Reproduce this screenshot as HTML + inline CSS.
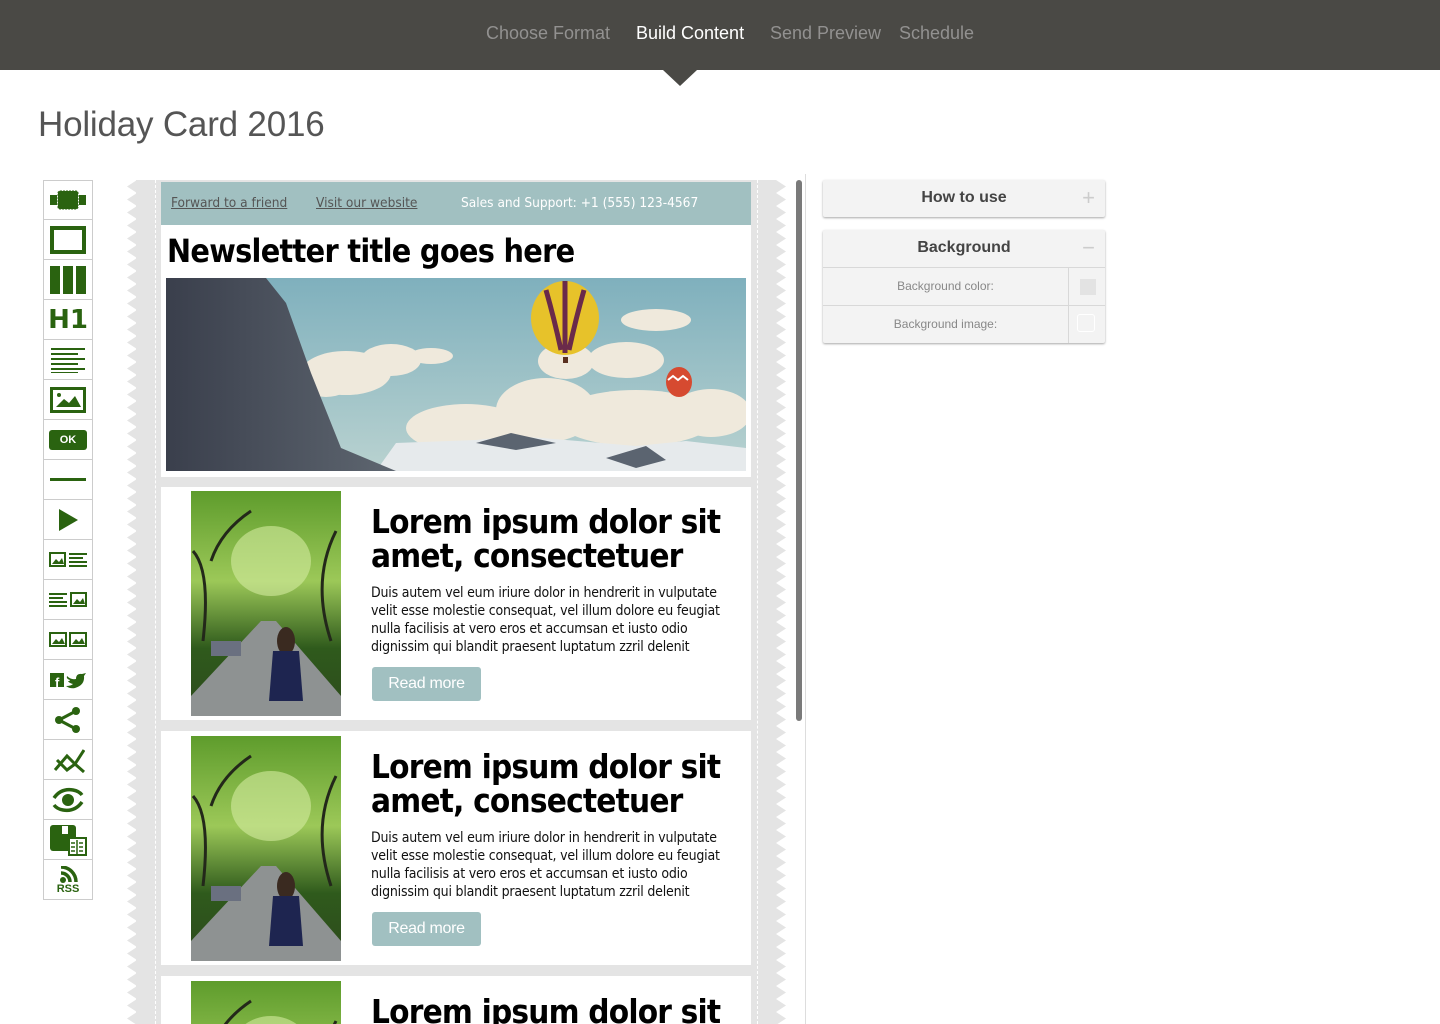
<!DOCTYPE html>
<html><head><meta charset="utf-8"><style>
*{margin:0;padding:0;box-sizing:border-box}
html,body{overflow:hidden}
body{width:1440px;height:1024px;background:#fff;font-family:"Liberation Sans",sans-serif;position:relative}
.top{position:absolute;left:0;top:0;width:1440px;height:70px;background:#4a4945}
.nav{position:absolute;top:23px;font-size:18px;color:#929190}
.arrow{position:absolute;left:663px;top:70px;width:0;height:0;border-left:17px solid transparent;border-right:17px solid transparent;border-top:16px solid #4a4945}
h1{position:absolute;left:38px;top:105px;font-size:35px;font-weight:normal;color:#555;letter-spacing:-0.2px}
.tb{position:absolute;left:43px;top:180px;width:50px}
.tb div{height:40px;border:1px solid #ccc;border-top:none;display:flex;align-items:center;justify-content:center;background:#fff}
.tb div:first-child{border-top:1px solid #ccc}
.canvas{position:absolute;left:136px;top:180px;width:640px;height:844px;background:#e4e4e4}
.dash{position:absolute;top:180px;height:844px;border-left:1px dashed #fff}
.blk{position:absolute;left:161px;width:590px;background:#fff;overflow:hidden}
.hdr{position:absolute;left:161px;top:182px;width:590px;height:43px;background:#a1c0c1;font-family:"DejaVu Sans Condensed","DejaVu Sans",sans-serif;font-size:13.6px}
.hdr a{position:absolute;top:13px;color:#555;text-decoration:underline}
.ttl{position:absolute;left:167px;top:232px;font:bold 32px "DejaVu Sans Condensed","DejaVu Sans",sans-serif;color:#000;letter-spacing:-0.7px}
.ph{position:absolute;left:30px;top:4px;width:150px;height:225px}
.ht{position:absolute;left:210px;top:18px;font:bold 33px/34px "DejaVu Sans Condensed","DejaVu Sans",sans-serif;color:#000;letter-spacing:-0.8px;white-space:nowrap}
.tx{position:absolute;left:210px;top:97px;font:14px/18px "DejaVu Sans Condensed","DejaVu Sans",sans-serif;color:#111;white-space:nowrap;letter-spacing:-0.2px}
.btn{position:absolute;left:211px;top:180px;width:109px;height:34px;background:#a1c0c1;border-radius:3px;color:#fff;font-size:16px;text-align:center;line-height:34px;letter-spacing:-0.3px}
.panel{position:absolute;left:823px;width:282px;background:#f3f3f3;box-shadow:0 1px 2px rgba(0,0,0,.35);border-radius:2px}
.ph2{height:37px;text-align:center;line-height:36px;font-size:16px;color:#444;font-weight:bold;position:relative}
.ph2 span{position:absolute;right:10px;top:0;color:#ccc;font-size:22px;font-weight:normal}
.row{height:38px;border-top:1px solid #d8d8d8;position:relative;font-size:12px;color:#888;line-height:37px}
.row .l{position:absolute;left:0;width:245px;text-align:center}
.row .r{position:absolute;left:245px;top:0;width:37px;height:37px;border-left:1px solid #d8d8d8}
</style></head><body>
<div class="top"></div>
<div class="nav" style="left:486px">Choose Format</div>
<div class="nav" style="left:636px;color:#fff">Build Content</div>
<div class="nav" style="left:770px">Send Preview</div>
<div class="nav" style="left:899px">Schedule</div>
<div class="arrow"></div>
<h1>Holiday Card 2016</h1>

<svg style="position:absolute;left:0;top:0" width="1440" height="1024">
<defs>
<pattern id="zl" x="127" y="180" width="10" height="13" patternUnits="userSpaceOnUse"><polygon points="10,0 0,6.5 10,13" fill="#e4e4e4"/></pattern>
<pattern id="zr" x="776" y="180" width="10" height="13" patternUnits="userSpaceOnUse"><polygon points="0,0 10,6.5 0,13" fill="#e4e4e4"/></pattern>
</defs>
<rect x="127" y="180" width="10" height="844" fill="url(#zl)"/>
<rect x="776" y="180" width="10" height="844" fill="url(#zr)"/>
<rect x="796" y="180" width="6" height="541" rx="3" fill="#7a7a7a"/>
<rect x="805" y="174" width="1" height="850" fill="#ddd"/>
</svg>
<div class="canvas"></div>
<div class="dash" style="left:155px"></div>
<div class="dash" style="left:757px"></div>

<div class="hdr">
<a style="left:10px">Forward to a friend</a>
<a style="left:155px">Visit our website</a>
<span style="position:absolute;left:300px;top:13px;color:#fff">Sales and Support: +1 (555) 123-4567</span>
</div>
<div class="blk" style="top:225px;height:252px"></div>
<div class="ttl">Newsletter title goes here</div>
<svg style="position:absolute;left:166px;top:278px" width="580" height="193" viewBox="0 0 580 193">
<defs><linearGradient id="sky" x1="0" y1="0" x2="0" y2="1"><stop offset="0" stop-color="#7fb0bd"/><stop offset="1" stop-color="#b9d2d0"/></linearGradient>
<linearGradient id="rock" x1="0" y1="0" x2="1" y2="0"><stop offset="0" stop-color="#3a3f4c"/><stop offset="1" stop-color="#5e6670"/></linearGradient></defs>
<rect width="580" height="193" fill="url(#sky)"/>
<g fill="#efe9dc">
<ellipse cx="180" cy="95" rx="45" ry="22"/><ellipse cx="225" cy="82" rx="30" ry="16"/><ellipse cx="160" cy="105" rx="25" ry="14"/><ellipse cx="265" cy="78" rx="22" ry="8"/>
<ellipse cx="400" cy="83" rx="28" ry="18"/><ellipse cx="460" cy="82" rx="38" ry="18"/><ellipse cx="405" cy="52" rx="18" ry="7"/>
<ellipse cx="490" cy="42" rx="35" ry="11"/>
<ellipse cx="300" cy="150" rx="60" ry="24"/><ellipse cx="380" cy="132" rx="50" ry="32"/><ellipse cx="470" cy="140" rx="80" ry="28"/><ellipse cx="545" cy="135" rx="40" ry="24"/>
</g>
<polygon points="210,193 230,165 310,162 350,158 400,162 470,168 520,163 580,170 580,193" fill="#e6eaec"/>
<polygon points="310,165 345,155 390,165 350,172" fill="#5b6470"/>
<polygon points="440,180 480,168 500,182 470,190" fill="#5b6470"/>
<polygon points="0,0 100,0 120,25 145,95 175,170 230,193 0,193" fill="url(#rock)"/>
<ellipse cx="399" cy="40" rx="34" ry="37" fill="#e7c22a"/>
<path d="M380,12 Q388,40 395,72 M399,3 L399,75 M418,12 Q410,40 403,72" stroke="#6a2a4a" stroke-width="5" fill="none"/>
<rect x="397" y="79" width="5" height="6" fill="#5a3020"/>
<ellipse cx="513" cy="104" rx="13" ry="15" fill="#d64a30"/>
<path d="M502,102 l5,-4 l5,4 l5,-4 l5,4" stroke="#fff" stroke-width="2" fill="none"/>
</svg>

<svg width="0" height="0" style="position:absolute">
<defs>
<linearGradient id="g1" x1="0" y1="0" x2="0" y2="1"><stop offset="0" stop-color="#5e9c2c"/><stop offset=".4" stop-color="#9cc858"/><stop offset=".7" stop-color="#2f5a1c"/><stop offset="1" stop-color="#2d4a1c"/></linearGradient>
<symbol id="park" viewBox="0 0 150 225">
<rect width="150" height="225" fill="url(#g1)"/>
<ellipse cx="80" cy="70" rx="40" ry="35" fill="#d4eba0" opacity=".6"/>
<path d="M2,60 Q20,80 12,150 M145,40 Q120,90 140,150 M60,20 Q30,40 20,70" stroke="#23281a" stroke-width="3" fill="none"/>
<polygon points="70,130 85,130 150,205 150,225 0,225 0,205" fill="#8e9292"/>
<rect x="20" y="150" width="30" height="15" fill="#6a7080"/>
<ellipse cx="95" cy="150" rx="9" ry="14" fill="#3a2a20"/>
<polygon points="82,160 108,160 112,210 78,210" fill="#1e2550"/>
</symbol>
</defs></svg>

<div class="blk" style="top:487px;height:233px">
<svg class="ph"><use href="#park"/></svg>
<div class="ht">Lorem ipsum dolor sit<br>amet, consectetuer</div>
<div class="tx">Duis autem vel eum iriure dolor in hendrerit in vulputate<br>velit esse molestie consequat, vel illum dolore eu feugiat<br>nulla facilisis at vero eros et accumsan et iusto odio<br>dignissim qui blandit praesent luptatum zzril delenit</div>
<div class="btn">Read more</div>
</div>
<div class="blk" style="top:731px;height:234px">
<svg class="ph" style="top:5px"><use href="#park"/></svg>
<div class="ht" style="top:19px">Lorem ipsum dolor sit<br>amet, consectetuer</div>
<div class="tx" style="top:98px">Duis autem vel eum iriure dolor in hendrerit in vulputate<br>velit esse molestie consequat, vel illum dolore eu feugiat<br>nulla facilisis at vero eros et accumsan et iusto odio<br>dignissim qui blandit praesent luptatum zzril delenit</div>
<div class="btn" style="top:181px">Read more</div>
</div>
<div class="blk" style="top:976px;height:48px">
<svg class="ph" style="top:5px"><use href="#park"/></svg>
<div class="ht" style="top:19px">Lorem ipsum dolor sit</div>
</div>

<div class="tb">
<div><svg width="36" height="20"><rect x="0" y="5" width="7" height="10" fill="#2a6310"/><rect x="29" y="5" width="7" height="10" fill="#2a6310"/><rect x="8" y="1" width="20" height="18" rx="2" fill="#2a6310" stroke="#2a6310" stroke-dasharray="2 1"/></svg></div>
<div><svg width="36" height="28"><rect x="2" y="2" width="32" height="24" fill="none" stroke="#2a6310" stroke-width="4"/></svg></div>
<div><svg width="36" height="28"><rect x="0" y="0" width="10" height="28" fill="#2a6310"/><rect x="13" y="0" width="10" height="28" fill="#2a6310"/><rect x="26" y="0" width="10" height="28" fill="#2a6310"/></svg></div>
<div><span style="font:bold 26px 'DejaVu Sans',sans-serif;color:#2a6310">H1</span></div>
<div><svg width="34" height="26"><g fill="#2a6310"><rect y="1" width="34" height="2"/><rect y="6" width="27" height="2"/><rect y="11" width="34" height="2"/><rect y="16" width="27" height="2"/><rect y="21" width="34" height="2"/><rect y="25" width="27" height="1"/></g></svg></div>
<div><svg width="36" height="26"><rect x="1.5" y="1.5" width="33" height="23" fill="none" stroke="#2a6310" stroke-width="3"/><circle cx="9" cy="8" r="2" fill="#2a6310"/><polygon points="6,20 14,12 19,16 25,9 31,20" fill="#2a6310"/></svg></div>
<div><span style="display:block;width:38px;height:20px;background:#2a6310;border-radius:3px;color:#fff;font:bold 11px/20px 'Liberation Sans';text-align:center">OK</span></div>
<div><div style="width:36px;height:3px;background:#2a6310;border:none"></div></div>
<div><svg width="24" height="26"><polygon points="3,2 22,13 3,24" fill="#2a6310"/></svg></div>
<div><svg width="38" height="16"><rect x="1" y="1" width="15" height="13" fill="none" stroke="#2a6310" stroke-width="2"/><polygon points="3,12 7,7 10,10 13,6 15,12" fill="#2a6310"/><g fill="#2a6310"><rect x="20" y="1" width="18" height="2"/><rect x="20" y="5" width="14" height="2"/><rect x="20" y="9" width="18" height="2"/><rect x="20" y="13" width="18" height="2"/></g></svg></div>
<div><svg width="38" height="16"><g fill="#2a6310"><rect x="0" y="1" width="18" height="2"/><rect x="0" y="5" width="14" height="2"/><rect x="0" y="9" width="18" height="2"/><rect x="0" y="13" width="18" height="2"/></g><rect x="22" y="1" width="15" height="13" fill="none" stroke="#2a6310" stroke-width="2"/><polygon points="24,12 28,7 31,10 34,6 36,12" fill="#2a6310"/></svg></div>
<div><svg width="38" height="16"><rect x="1" y="1" width="16" height="13" fill="none" stroke="#2a6310" stroke-width="2"/><polygon points="3,12 7,7 10,10 13,6 16,12" fill="#2a6310"/><rect x="21" y="1" width="16" height="13" fill="none" stroke="#2a6310" stroke-width="2"/><polygon points="23,12 27,7 30,10 33,6 36,12" fill="#2a6310"/></svg></div>
<div><svg width="38" height="18"><rect x="1" y="2" width="14" height="14" fill="#2a6310"/><text x="6" y="16" font-family="Liberation Sans" font-weight="bold" font-size="13" fill="#fff">f</text><path d="M18,5 Q22,9 27,8 Q27,2 33,3 L37,2 L35,5 Q36,14 26,17 Q21,18 17,15 Q22,15 24,13 Q20,12 19,10 Q21,10 21,9 Q17,8 18,5Z" fill="#2a6310"/></svg></div>
<div><svg width="28" height="26"><g stroke="#2a6310" stroke-width="3"><line x1="5" y1="13" x2="22" y2="4"/><line x1="5" y1="13" x2="22" y2="22"/></g><g fill="#2a6310"><circle cx="5" cy="13" r="4"/><circle cx="22" cy="4" r="4"/><circle cx="22" cy="22" r="4"/></g></svg></div>
<div><svg width="34" height="28"><path d="M4,24 L16,10 L24,18 L33,4 M6,14 L16,24 L24,18 L33,26" stroke="#2a6310" stroke-width="3" fill="none"/></svg></div>
<div><svg width="34" height="28"><circle cx="17" cy="14" r="6" fill="#2a6310"/><path d="M3,12 Q10,2 22,4 Q28,5 31,9 M31,16 Q24,26 12,24 Q6,23 3,19" stroke="#2a6310" stroke-width="3.5" fill="none"/></svg></div>
<div><svg width="38" height="32"><rect x="1" y="1" width="26" height="26" rx="3" fill="#2a6310"/><rect x="13" y="2" width="6" height="8" fill="#fff"/><rect x="20" y="14" width="17" height="17" fill="#fff" stroke="#2a6310" stroke-width="2"/><path d="M28,16 L28,30 M22,19h4M22,23h4M22,27h4M30,19h4M30,23h4M30,27h4" stroke="#2a6310" stroke-width="1.5"/></svg></div>
<div style="flex-direction:column"><svg width="20" height="18"><circle cx="5" cy="14" r="3" fill="#2a6310"/><path d="M3,7 A9,9 0 0 1 12,16 M3,1 A15,15 0 0 1 18,16" stroke="#2a6310" stroke-width="3.5" fill="none"/></svg><span style="font:bold 11px/10px 'Liberation Sans';color:#2a6310">RSS</span></div>
</div>

<div class="panel" style="top:180px"><div class="ph2">How to use<span>+</span></div></div>
<div class="panel" style="top:230px">
<div class="ph2">Background<span>−</span></div>
<div class="row"><div class="l">Background color:</div><div class="r"><div style="position:absolute;left:11px;top:11px;width:16px;height:16px;background:#e3e3e3"></div></div></div>
<div class="row"><div class="l">Background image:</div><div class="r"><div style="position:absolute;left:8px;top:8px;width:18px;height:18px;border:1px solid #fff;border-radius:3px"></div></div></div>
</div>
</body></html>
